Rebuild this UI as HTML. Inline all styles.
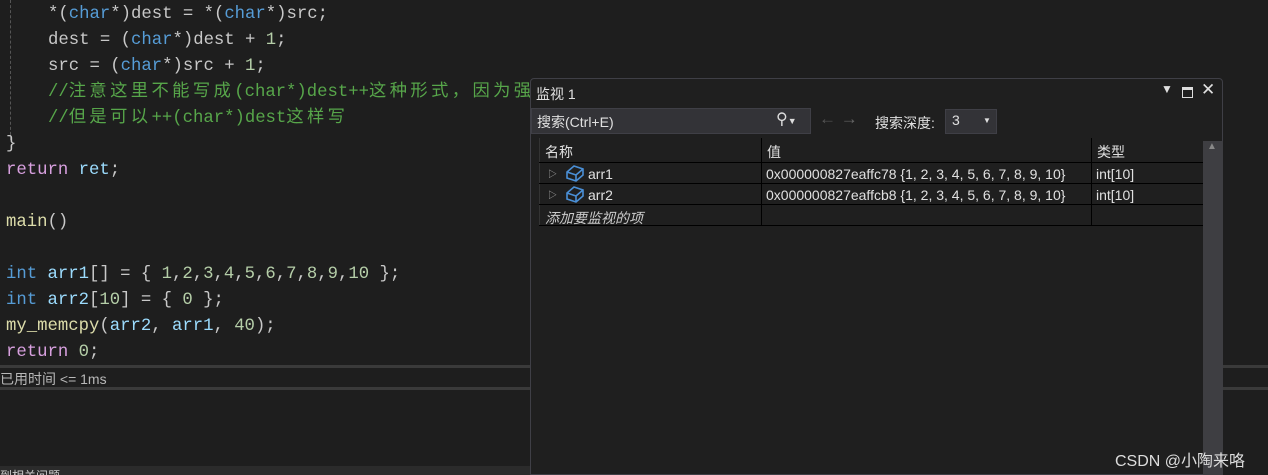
<!DOCTYPE html>
<html><head><meta charset="utf-8"><style>
*{margin:0;padding:0;box-sizing:border-box}
html,body{width:1268px;height:475px;overflow:hidden}
body{background:#1e1e1e;position:relative;font-family:"Liberation Sans","Noto Sans CJK SC",sans-serif}
.code{position:absolute;left:0;top:2px;font-family:"Liberation Mono","Noto Sans CJK SC",monospace;font-size:17.3px;color:#c8c8c8;white-space:pre}
.ln{position:absolute;height:26px;line-height:26px}
.k{color:#569cd6}.v{color:#9cdcfe}.c{color:#57a64a}.n{color:#b5cea8}.r{color:#d8a0df}.f{color:#dcdcaa}
.cj{letter-spacing:3.4px}
.guide{position:absolute;left:10px;top:0;height:140px;border-left:1px dashed #555}
.sep{position:absolute;height:3px;background:#3a3a3a}
.abs{position:absolute}
.w{position:absolute;left:530px;top:78px;width:693px;height:397px;background:#1f1f1f;border:1px solid #3f3f46;border-radius:4px 4px 0 0;color:#e0e0e0;font-size:14px}
.t{position:absolute;font-size:14px;color:#e0e0e0;white-space:nowrap}
</style></head><body>
<div class="guide"></div>
<div class="code">
<div class="ln" style="left:48px;top:0">*(<span class="k">char</span>*)dest = *(<span class="k">char</span>*)src;</div>
<div class="ln" style="left:48px;top:26px">dest = (<span class="k">char</span>*)dest + <span class="n">1</span>;</div>
<div class="ln" style="left:48px;top:52px">src = (<span class="k">char</span>*)src + <span class="n">1</span>;</div>
<div class="ln c" style="left:48px;top:78px">//<span class="cj">注意这里不能写成</span>(char*)dest++<span class="cj">这种形式，因为强</span></div>
<div class="ln c" style="left:48px;top:104px">//<span class="cj">但是可以</span>++(char*)dest<span class="cj">这样写</span></div>
<div class="ln" style="left:6px;top:130px">}</div>
<div class="ln" style="left:6px;top:156px"><span class="r">return</span> <span class="v">ret</span>;</div>
<div class="ln f" style="left:6px;top:208px">main<span style="color:#c8c8c8">()</span></div>
<div class="ln" style="left:6px;top:260px"><span class="k">int</span> <span class="v">arr1</span>[] = { <span class="n">1</span>,<span class="n">2</span>,<span class="n">3</span>,<span class="n">4</span>,<span class="n">5</span>,<span class="n">6</span>,<span class="n">7</span>,<span class="n">8</span>,<span class="n">9</span>,<span class="n">10</span> };</div>
<div class="ln" style="left:6px;top:286px"><span class="k">int</span> <span class="v">arr2</span>[<span class="n">10</span>] = { <span class="n">0</span> };</div>
<div class="ln" style="left:6px;top:312px"><span class="f">my_memcpy</span>(<span class="v">arr2</span>, <span class="v">arr1</span>, <span class="n">40</span>);</div>
<div class="ln" style="left:6px;top:338px"><span class="r">return</span> <span class="n">0</span>;</div>
</div>
<div class="sep" style="left:0;top:365px;width:1268px"></div>
<div class="sep" style="left:0;top:387px;width:1268px"></div>
<div class="t" style="left:0;top:369px;color:#b8b8b8">已用时间 &lt;= 1ms</div>
<div class="abs" style="left:0;top:466px;width:530px;height:9px;background:#2b2b2b"></div>
<div class="t" style="left:0;top:467px;font-size:12px;color:#ccc">到相关问题</div>

<div class="w">
<div class="t" style="left:5px;top:5px">监视 1</div>
<div class="t" style="left:630px;top:3px;font-size:12px">▼</div>
<div class="abs" style="left:651px;top:8px;width:11px;height:11px;border:1.5px solid #ddd;border-top-width:3px"></div>
<div class="t" style="left:670px;top:1px;font-size:17px">✕</div>
<div class="abs" style="left:0;top:29px;width:280px;height:26px;background:#333337;border:1px solid #3f3f46"></div>
<div class="t" style="left:6px;top:33px">搜索(Ctrl+E)</div>
<div class="t" style="left:245px;top:30px;font-size:16px;color:#ddd">⚲<span style="font-size:9px">▼</span></div>
<div class="t" style="left:288px;top:30px;font-size:17px;color:#555">← <span style="color:#666">→</span></div>
<div class="t" style="left:344px;top:34px">搜索深度:</div>
<div class="abs" style="left:414px;top:30px;width:52px;height:25px;background:#333337;border:1px solid #3f3f46"></div>
<div class="t" style="left:421px;top:33px">3</div>
<div class="t" style="left:452px;top:37px;font-size:8px">▼</div>
<div class="abs" style="left:8px;top:59px;width:664px;height:88px">
 <div class="abs" style="left:0;top:0;width:1px;height:88px;background:#333"></div>
 <div class="abs" style="left:0;top:24px;width:664px;height:1px;background:#000"></div>
 <div class="abs" style="left:0;top:45px;width:664px;height:1px;background:#000"></div>
 <div class="abs" style="left:0;top:66px;width:664px;height:1px;background:#000"></div>
 <div class="abs" style="left:0;top:87px;width:664px;height:1px;background:#000"></div>
 <div class="abs" style="left:222px;top:0;width:1px;height:88px;background:#000"></div>
 <div class="abs" style="left:552px;top:0;width:1px;height:88px;background:#000"></div>
</div>
<div class="t" style="left:14px;top:63px">名称</div>
<div class="t" style="left:236px;top:63px">值</div>
<div class="t" style="left:566px;top:63px">类型</div>
<div class="t" style="left:17px;top:88px;font-size:9px;color:#aaa">▷</div>
<div class="t" style="left:17px;top:109px;font-size:9px;color:#aaa">▷</div>
<svg class="abs" style="left:34px;top:84px" width="20" height="20" viewBox="0 0 20 20"><path d="M2 9 L9 3 L18 6 L18 12 L11 18 L2 15 Z M2 9 L11 12 L18 6 M11 12 L11 18" fill="none" stroke="#4a8fd6" stroke-width="1.6"/></svg>
<svg class="abs" style="left:34px;top:105px" width="20" height="20" viewBox="0 0 20 20"><path d="M2 9 L9 3 L18 6 L18 12 L11 18 L2 15 Z M2 9 L11 12 L18 6 M11 12 L11 18" fill="none" stroke="#4a8fd6" stroke-width="1.6"/></svg>
<div class="t" style="left:57px;top:87px">arr1</div>
<div class="t" style="left:57px;top:108px">arr2</div>
<div class="t" style="left:235px;top:87px">0x000000827eaffc78 {1, 2, 3, 4, 5, 6, 7, 8, 9, 10}</div>
<div class="t" style="left:235px;top:108px">0x000000827eaffcb8 {1, 2, 3, 4, 5, 6, 7, 8, 9, 10}</div>
<div class="t" style="left:565px;top:87px">int[10]</div>
<div class="t" style="left:565px;top:108px">int[10]</div>
<div class="t" style="left:14px;top:129px;font-style:italic;color:#ccc">添加要监视的项</div>
<div class="abs" style="left:672px;top:62px;width:20px;height:335px;background:#3e3e42"></div>
<div class="t" style="left:676px;top:62px;font-size:10px;color:#888">▲</div>
</div>
<div class="t" style="left:1115px;top:447px;font-size:16px;color:#ddd">CSDN @小陶来咯</div>
</body></html>
